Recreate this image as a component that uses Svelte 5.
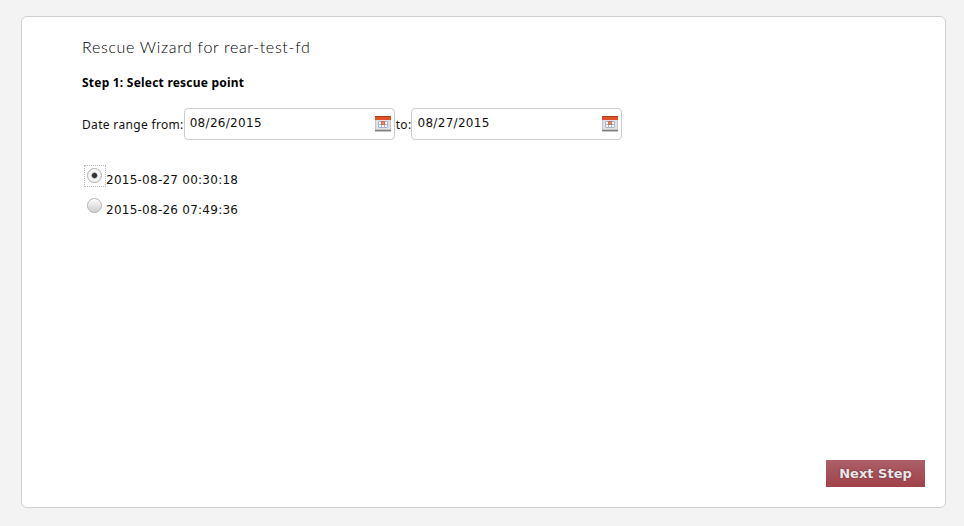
<script>
  let from = $state('08/26/2015');
  let to = $state('08/27/2015');
  let point = $state('a');

  const points = [
    { id: 'a', label: '2015-08-27 00:30:18' },
    { id: 'b', label: '2015-08-26 07:49:36' }
  ];
</script>

{#snippet calendar()}
  <svg class="cal" width="16" height="16" viewBox="0 0 16 16" aria-hidden="true">
    <rect x="0" y="0" width="16" height="16" fill="#c6c6c6" />
    <rect x="0" y="0" width="16" height="4" fill="#e0532a" />
    <rect x="0" y="0" width="16" height="1" fill="#b23a1a" />
    <rect x="1" y="4" width="14" height="9" fill="#e2e2e6" />
    <rect x="3" y="5" width="10" height="7" fill="#fff" />
    <path d="M3.5 5.5h9v6h-9zM6.5 5v7M9.5 5v7M3 8.5h10" fill="none" stroke="#a6b4d6" stroke-width="1" />
    <rect x="7" y="6" width="2" height="2" fill="#ee8f6a" />
    <path d="M6.5 5.5h3v3h-3z" fill="none" stroke="#d9604a" stroke-width="1" />
    <rect x="0" y="14" width="16" height="1" fill="#7f7f7f" />
  </svg>
{/snippet}

<div class="card">
  <h1>Rescue Wizard for rear-test-fd</h1>
  <h2>Step 1: Select rescue point</h2>

  <div class="range">
    <span>Date range from:</span>
    <div class="date">
      <input type="text" bind:value={from} />
      {@render calendar()}
    </div>
    <span class="to">to:</span>
    <div class="date">
      <input type="text" bind:value={to} />
      {@render calendar()}
    </div>
  </div>

  <div class="points">
    {#each points as p}
      <label class="point">
        <span class="radio-wrap" class:focused={point === p.id}>
          <input type="radio" name="point" value={p.id} bind:group={point} />
        </span>
        <span class="stamp">{p.label}</span>
      </label>
    {/each}
  </div>

  <div class="footer">
    <button type="button">Next Step</button>
  </div>
</div>

<style>
  :global(body) {
    background: #f3f3f3;
    margin: 0;
  }

  .card {
    box-sizing: border-box;
    width: 925px;
    height: 492px;
    margin: 16px 0 0 21px;
    padding: 20px 20px 20px 60px;
    background: #fff;
    border: 1px solid #cfcfcf;
    border-radius: 6px;
    display: flex;
    flex-direction: column;
    font-family: "Noto Sans", sans-serif;
    color: #111;
  }

  h1 {
    margin: 0;
    font-family: Lato, sans-serif;
    font-weight: 300;
    font-size: 16px;
    line-height: 20px;
    letter-spacing: 0.68px;
    color: #000;
  }

  h2 {
    margin: 18px 0 0;
    font-weight: 700;
    font-size: 12px;
    line-height: 16px;
    letter-spacing: 0.22px;
    color: #000;
  }

  .range {
    display: flex;
    align-items: center;
    margin-top: 17px;
    font-size: 12px;
    letter-spacing: 0.33px;
    color: #111;
  }

  .to {
    margin-left: 1px;
  }

  .date {
    box-sizing: border-box;
    width: 211px;
    height: 32px;
    padding: 0 3px 0 5px;
    display: flex;
    align-items: center;
    border: 1px solid #ccc;
    border-radius: 4px;
    background: #fff;
  }

  .date input {
    flex: 1;
    min-width: 0;
    border: 0;
    padding: 0 0 2px;
    outline: none;
    background: transparent;
    font-family: "DejaVu Sans", sans-serif;
    font-size: 12px;
    letter-spacing: 0.3px;
    color: #111;
  }

  .cal {
    flex: none;
  }

  .points {
    margin-top: 25px;
    display: flex;
    flex-direction: column;
    gap: 8px;
  }

  .point {
    display: flex;
    align-items: flex-end;
    height: 22px;
    margin-left: 2px;
  }

  .radio-wrap {
    box-sizing: border-box;
    width: 22px;
    height: 22px;
    padding: 0 1px 1px 0;
    display: flex;
    align-items: center;
    justify-content: center;
    border: 1px dotted transparent;
  }

  .radio-wrap.focused {
    border-color: #b8b8b8;
  }

  .radio-wrap input {
    appearance: none;
    box-sizing: border-box;
    width: 15px;
    height: 15px;
    margin: 0;
    border: 1px solid #b0b0b0;
    border-radius: 50%;
    background: linear-gradient(#fbfbfb, #cfcfcf);
    box-shadow: inset 0 1px 1px #fff;
  }

  .radio-wrap input:checked {
    background: radial-gradient(circle, #333 0 2px, #777 2.6px, #f4f4f4 3.4px);
  }

  .stamp {
    font-family: "DejaVu Sans", sans-serif;
    font-size: 12px;
    line-height: 14px;
    letter-spacing: 0.25px;
    color: #111;
  }

  .footer {
    margin-top: auto;
    display: flex;
    justify-content: flex-end;
  }

  button {
    width: 99px;
    height: 27px;
    border: 0;
    padding: 0;
    background: linear-gradient(#ad5f68, #a0424a);
    font-family: "DejaVu Sans", sans-serif;
    font-weight: 700;
    font-size: 13px;
    color: #e8e8e8;
    text-shadow: 0 0 2px #5a2a30;
  }
</style>
